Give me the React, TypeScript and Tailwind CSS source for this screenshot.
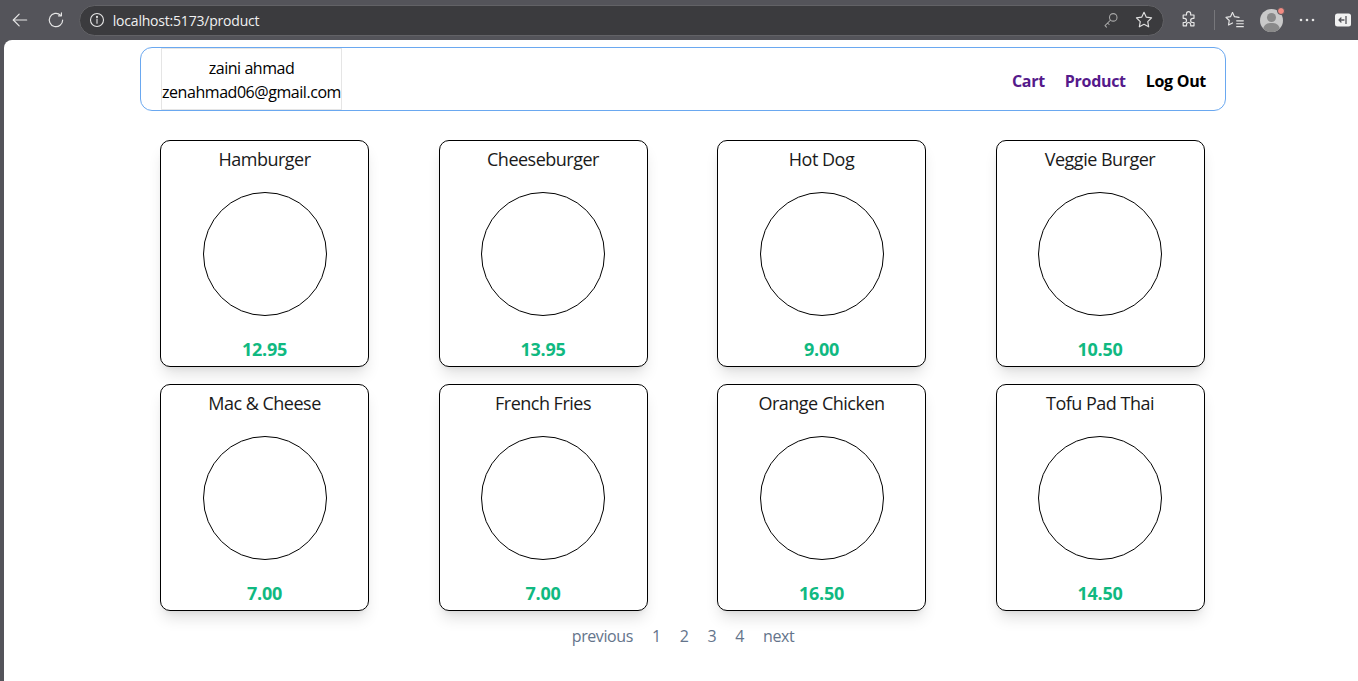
import React from "react";

const products = [
  { name: "Hamburger", price: "12.95" },
  { name: "Cheeseburger", price: "13.95" },
  { name: "Hot Dog", price: "9.00" },
  { name: "Veggie Burger", price: "10.50" },
  { name: "Mac & Cheese", price: "7.00" },
  { name: "French Fries", price: "7.00" },
  { name: "Orange Chicken", price: "16.50" },
  { name: "Tofu Pad Thai", price: "14.50" },
];

const font = { fontFamily: '"Open Sans", "Noto Sans", sans-serif' };

function ChromeBar() {
  return (
    <div className="h-[40px] flex items-center text-[#e6e6e6] shrink-0">
      <div className="w-[40px] flex justify-center ml-[0px]">
        <svg width="20" height="20" viewBox="0 0 24 24" fill="none" stroke="#e6e6e6" strokeWidth="1.4" strokeLinecap="round" strokeLinejoin="round">
          <path d="M20 12H4" />
          <path d="M11 5l-7 7 7 7" />
        </svg>
      </div>
      <div className="w-[32px] flex justify-center">
        <svg width="20" height="20" viewBox="0 0 24 24" fill="none" stroke="#e6e6e6" strokeWidth="1.4" strokeLinecap="round" strokeLinejoin="round">
          <path d="M20 12a8 8 0 1 1-2.6-5.9" />
          <path d="M18.5 3.5v3.5H15" />
        </svg>
      </div>
      <div className="ml-[7px] w-[1089px] h-[31px] rounded-full bg-[#3b3b3e] border border-[#626266] flex items-center">
        <div className="w-[32px] flex justify-center ml-[1px]">
          <svg width="16" height="16" viewBox="0 0 16 16" fill="none" stroke="#e6e6e6" strokeWidth="1.1">
            <circle cx="8" cy="8" r="6.5" />
            <path d="M8 7v4.2" strokeLinecap="round" />
            <circle cx="8" cy="4.9" r="0.5" fill="#e6e6e6" />
          </svg>
        </div>
        <span className="text-[14px] text-[#f0f0f0] tracking-[-0.2px]" style={{ fontFamily: '"Open Sans", sans-serif' }}>
          localhost:5173/product
        </span>
        <div className="flex-1" />
        <svg width="18" height="18" viewBox="0 0 24 24" fill="none" stroke="#a8a8a8" strokeWidth="1.4" strokeLinecap="round" strokeLinejoin="round">
          <circle cx="15" cy="8.5" r="5" />
          <path d="M11.5 12L4 19.5l2 2M7.5 16l2 2" />
        </svg>
        <div className="w-[14px]" />
        <svg width="20" height="20" viewBox="0 0 24 24" fill="none" stroke="#e0e0e0" strokeWidth="1.4" strokeLinejoin="round">
          <path d="M12 2.8l2.8 5.8 6.3.9-4.6 4.4 1.1 6.3L12 17.2l-5.6 3 1.1-6.3L2.9 9.5l6.3-.9z" />
        </svg>
        <div className="w-[9px]" />
      </div>
      <div className="w-[50px] flex justify-center ml-[0px]">
        <svg width="20" height="20" viewBox="0 0 24 24" fill="none" stroke="#e6e6e6" strokeWidth="1.4" strokeLinejoin="round">
          <path d="M9 4.5a2.5 2.5 0 0 1 5 0V6h4v4h-1.5a2.5 2.5 0 0 0 0 5H18v4h-4v-1.5a2.5 2.5 0 0 0-5 0V19H5v-4h1.5a2.5 2.5 0 0 0 0-5H5V6h4z" />
        </svg>
      </div>
      <div className="w-px h-[20px] bg-[#77777b]" />
      <div className="w-[42px] flex justify-center">
        <svg width="22" height="20" viewBox="0 0 26 24" fill="none" stroke="#e6e6e6" strokeWidth="1.4" strokeLinejoin="round" strokeLinecap="round">
          <path d="M10 3l2.4 5 5.4.8" />
          <path d="M10 3L7.6 8l-5.4.8 3.9 3.8-.9 5.4L10 15.5" />
          <path d="M15 13h8M15 16.5h8M15 20h8" />
        </svg>
      </div>
      <div className="w-[30px] flex justify-center relative">
        <div className="w-[23px] h-[23px] rounded-full bg-[#c9c9c9] overflow-hidden relative">
          <div className="absolute left-[7px] top-[4px] w-[9px] h-[9px] rounded-full bg-[#8a8a8a]" />
          <div className="absolute left-[3px] top-[14px] w-[17px] h-[14px] rounded-full bg-[#8a8a8a]" />
        </div>
        <div className="absolute right-[1px] top-[-2px] w-[8px] h-[8px] rounded-full bg-[#f28b82] border border-[#54545a]" />
      </div>
      <div className="w-[42px] flex justify-center">
        <svg width="20" height="6" viewBox="0 0 20 6" fill="#e6e6e6">
          <circle cx="4" cy="3" r="1.3" />
          <circle cx="10" cy="3" r="1.3" />
          <circle cx="16" cy="3" r="1.3" />
        </svg>
      </div>
      <div className="w-[30px] flex justify-center">
        <svg width="18" height="16" viewBox="0 0 18 16">
          <rect x="1" y="1.5" width="16" height="13" rx="2.5" fill="#f2f2f2" />
          <path d="M10 8H5M7 6L5 8l2 2" stroke="#54545a" strokeWidth="1.3" fill="none" strokeLinecap="round" strokeLinejoin="round" />
          <path d="M12 4v8" stroke="#54545a" strokeWidth="1.3" />
        </svg>
      </div>
    </div>
  );
}

function Card({ name, price }: { name: string; price: string }) {
  return (
    <div className="w-[209px] h-[227px] border border-black rounded-[10px] bg-white shadow-[0_10px_15px_-3px_rgba(0,0,0,0.12),0_4px_6px_-4px_rgba(0,0,0,0.1)] flex flex-col items-center pt-[4px] pb-[3px]">
      <div className="text-[18px] leading-[28px] text-[#1a1a1a] tracking-[-0.5px]">{name}</div>
      <div className="mt-[19px] w-[124px] h-[124px] rounded-full border border-black" />
      <div className="mt-[19px] text-[18px] leading-[28px] font-bold text-[#10b981] tracking-[-0.3px]">{price}</div>
    </div>
  );
}

export default function App() {
  return (
    <div className="w-[1358px] h-[681px] bg-[#54545a] flex flex-col overflow-hidden">
      <ChromeBar />
      <div className="flex-1 ml-[4px] bg-white rounded-tl-[8px]" style={font}>
        <div className="ml-[136px] mt-[7px] w-[1086px] h-[64px] border border-[#6aa8f0] rounded-[12px] flex items-stretch pl-[20px] pr-[19px]">
          <div className="w-[181px] border border-[#e5e5e5] flex flex-col items-center justify-center pt-[2px] text-[16px] leading-[24px] text-black tracking-[-0.45px]">
            <div>zaini ahmad</div>
            <div>zenahmad06@gmail.com</div>
          </div>
          <div className="flex-1" />
          <div className="flex items-center gap-[20px] pt-[3px] text-[16px] font-bold tracking-[-0.3px]">
            <span className="text-[#551a8b]">Cart</span>
            <span className="text-[#551a8b]">Product</span>
            <span className="text-black">Log Out</span>
          </div>
        </div>
        <div className="ml-[156px] mt-[29px] w-[1045px] grid grid-cols-4 gap-x-[69px] gap-y-[17px]">
          {products.map((p) => (
            <Card key={p.name} name={p.name} price={p.price} />
          ))}
        </div>
        <div className="mt-[13px] flex justify-center gap-[19px] text-[16px] leading-[24px] text-[#64748b] ml-[4px] tracking-[-0.4px]">
          <span>previous</span>
          <span>1</span>
          <span>2</span>
          <span>3</span>
          <span>4</span>
          <span>next</span>
        </div>
      </div>
    </div>
  );
}
